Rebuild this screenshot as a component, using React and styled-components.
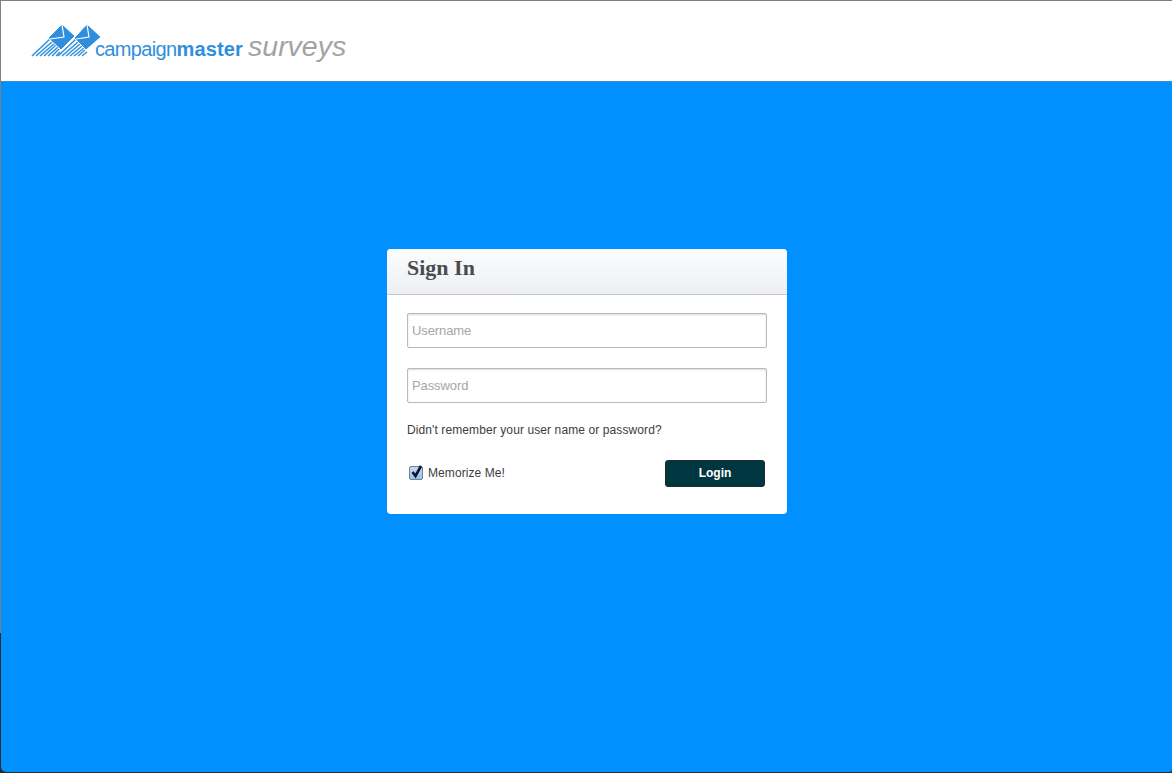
import React from "react";
import styled, { createGlobalStyle } from "styled-components";

const GlobalStyle = createGlobalStyle`
  html, body {
    margin: 0;
    padding: 0;
    height: 100%;
    background: #2a2a2a;
  }
  body {
    font-family: "Liberation Sans", Arial, sans-serif;
    overflow: hidden;
  }
  #root {
    height: 100%;
  }
`;

const Page = styled.div`
  display: flex;
  flex-direction: column;
  height: 773px;
  box-sizing: border-box;
  padding: 0 0 1px 1px;
  border-top: 1px solid #808080;
  background: linear-gradient(#808080 632px, #2a2a2a 632px);
`;

const Header = styled.header`
  display: flex;
  align-items: flex-start;
  height: 80px;
  flex: none;
  background: #fff;
  padding: 23px 0 0 30px;
  box-sizing: border-box;
`;

const LogoRow = styled.div`
  display: flex;
  align-items: flex-start;
`;

const BrandName = styled.span`
  margin: 13px 0 0 -8px;
  font-size: 20px;
  line-height: 24px;
  letter-spacing: -0.65px;
  color: #2f8fdc;
`;

const BrandStrong = styled.b`
  font-weight: 700;
  letter-spacing: 0.15px;
`;

const Product = styled.span`
  margin: 4px 0 0 5px;
  font-size: 28.5px;
  line-height: 36px;
  font-style: italic;
  color: #a3a3a3;
`;

const Main = styled.main`
  flex: 1;
  background: #0090ff;
  border-top: 1px solid #3a8fd0;
  border-radius: 0 0 3px 5px;
  padding: 167px 0 0 386px;
`;

const Card = styled.section`
  width: 400px;
  height: 265px;
  background: #fff;
  border-radius: 4px;
  overflow: hidden;
`;

const CardHeader = styled.div`
  height: 46px;
  box-sizing: border-box;
  padding: 5px 20px 0;
  background: linear-gradient(#fbfcfd, #edf0f3);
  border-bottom: 1px solid #c4c6c8;
`;

const Title = styled.h1`
  margin: 0;
  font-family: "Liberation Serif", "Times New Roman", serif;
  font-size: 22px;
  line-height: 28px;
  font-weight: 700;
  color: #4b4b4d;
`;

const Form = styled.form`
  display: flex;
  flex-direction: column;
  padding: 18px 20px 0;
`;

const Field = styled.input`
  box-sizing: border-box;
  width: 360px;
  height: 35px;
  margin-bottom: 20px;
  padding: 0 4px;
  border: 1px solid #b9b9b9;
  border-radius: 2px;
  box-shadow: inset 0 1px 2px rgba(0, 0, 0, 0.14);
  font: 13px "Liberation Sans", Arial, sans-serif;
  letter-spacing: -0.1px;
  outline: none;
  &::placeholder {
    color: #a6a6a6;
    opacity: 1;
  }
`;

const Hint = styled.a`
  font-size: 12px;
  line-height: 16px;
  margin-top: -1px;
  letter-spacing: 0.1px;
  color: #3d3d3d;
`;

const Actions = styled.div`
  display: flex;
  align-items: center;
  justify-content: space-between;
  margin-top: 22px;
  padding-right: 2px;
`;

const Remember = styled.label`
  display: flex;
  align-items: center;
  gap: 5px;
  padding-left: 2px;
  margin-top: -2px;
  font-size: 12px;
  letter-spacing: 0.08px;
  color: #3d3d3d;
`;

const CheckBox = styled.span`
  position: relative;
  display: block;
  width: 12px;
  height: 12px;
  border: 1px solid #6f7f92;
  border-radius: 2px;
  background: linear-gradient(#c6daf0, #9fc0e6);
  & svg {
    position: absolute;
    left: 0;
    top: -3px;
  }
`;

const LoginButton = styled.button`
  width: 100px;
  height: 27px;
  padding: 0 0 2px;
  background: #00363f;
  border: 1px solid #1e2a2c;
  border-radius: 3px;
  color: #fff;
  font: 700 12px "Liberation Sans", Arial, sans-serif;
`;

const Logo = () => (
  <svg width="72" height="34" viewBox="0 0 72 34">
    <g stroke="#2f8fdc" strokeWidth="1.5" fill="none">
      <path d="M1 32 L20 14" />
      <path d="M5 32 L22 17" />
      <path d="M9 32 L24 19" />
      <path d="M13 32 L25 21" />
      <path d="M17 32 L27 23" />
      <path d="M21 32 L28 25" />
      <path d="M25 32 L29 28" />
      <path d="M27 32 L45 15" />
      <path d="M31 32 L47 18" />
      <path d="M35 32 L49 20" />
      <path d="M39 32 L51 22" />
      <path d="M43 32 L53 24" />
      <path d="M47 32 L54 26" />
      <path d="M51 32 L56 28" />
    </g>
    <g fill="#2f8fdc" stroke="#fff" strokeWidth="1">
      <path d="M31 0 L44 12 L30 26 L17 14Z" />
      <path d="M56 0 L70 13 L55 26 L43 14Z" />
    </g>
    <g fill="none" stroke="#fff" strokeWidth="1.2">
      <path d="M31 1 L33 13 L19 15" />
      <path d="M56 1 L58 13 L45 15" />
    </g>
  </svg>
);

const Check = () => (
  <svg width="14" height="15" viewBox="0 0 14 15">
    <path d="M2.5 8 L5.5 12 L11 2" fill="none" stroke="#0b1730" strokeWidth="2.6" />
  </svg>
);

export default function App() {
  return (
    <Page>
      <GlobalStyle />
      <Header>
        <LogoRow>
          <Logo />
          <BrandName>
            campaign<BrandStrong>master</BrandStrong>
          </BrandName>
          <Product>surveys</Product>
        </LogoRow>
      </Header>
      <Main>
        <Card>
          <CardHeader>
            <Title>Sign In</Title>
          </CardHeader>
          <Form>
            <Field placeholder="Username" />
            <Field placeholder="Password" type="password" />
            <Hint>Didn't remember your user name or password?</Hint>
            <Actions>
              <Remember>
                <CheckBox>
                  <Check />
                </CheckBox>
                Memorize Me!
              </Remember>
              <LoginButton type="button">Login</LoginButton>
            </Actions>
          </Form>
        </Card>
      </Main>
    </Page>
  );
}
